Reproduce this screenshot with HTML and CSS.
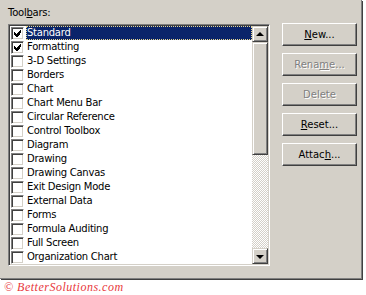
FILE: index.html
```html
<!DOCTYPE html>
<html>
<head>
    <title>Customize - Toolbars</title>
    <link rel="stylesheet" href="styles.css">
</head>
<body>
    <div class="dialog">
        <div class="left">
            <div class="label">Tool<u>b</u>ars:</div>
            <div class="listbox">
                <div class="items">
                    <div class="row selected"><span class="check on"><svg width="7" height="7" viewBox="0 0 7 7" shape-rendering="crispEdges"><path d="M6 0h1v3h-1zM5 1h1v4h-1zM4 2h1v4h-1zM3 3h1v4h-1zM2 4h1v3h-1zM1 3h1v3h-1zM0 2h1v3h-1z" fill="#000"/></svg></span><span class="text">Standard</span></div>
                    <div class="row"><span class="check on"><svg width="7" height="7" viewBox="0 0 7 7" shape-rendering="crispEdges"><path d="M6 0h1v3h-1zM5 1h1v4h-1zM4 2h1v4h-1zM3 3h1v4h-1zM2 4h1v3h-1zM1 3h1v3h-1zM0 2h1v3h-1z" fill="#000"/></svg></span><span class="text">Formatting</span></div>
                    <div class="row"><span class="check"></span><span class="text">3-D Settings</span></div>
                    <div class="row"><span class="check"></span><span class="text">Borders</span></div>
                    <div class="row"><span class="check"></span><span class="text">Chart</span></div>
                    <div class="row"><span class="check"></span><span class="text">Chart Menu Bar</span></div>
                    <div class="row"><span class="check"></span><span class="text">Circular Reference</span></div>
                    <div class="row"><span class="check"></span><span class="text">Control Toolbox</span></div>
                    <div class="row"><span class="check"></span><span class="text">Diagram</span></div>
                    <div class="row"><span class="check"></span><span class="text">Drawing</span></div>
                    <div class="row"><span class="check"></span><span class="text">Drawing Canvas</span></div>
                    <div class="row"><span class="check"></span><span class="text">Exit Design Mode</span></div>
                    <div class="row"><span class="check"></span><span class="text">External Data</span></div>
                    <div class="row"><span class="check"></span><span class="text">Forms</span></div>
                    <div class="row"><span class="check"></span><span class="text">Formula Auditing</span></div>
                    <div class="row"><span class="check"></span><span class="text">Full Screen</span></div>
                    <div class="row"><span class="check"></span><span class="text">Organization Chart</span></div>
                </div>
                <div class="scrollbar">
                    <div class="sbtn"><span class="arrow up"></span></div>
                    <div class="thumb"></div>
                    <div class="track"></div>
                    <div class="sbtn"><span class="arrow down"></span></div>
                </div>
            </div>
        </div>
        <div class="buttons">
            <button><u>N</u>ew...</button>
            <button disabled>Rena<u>m</u>e...</button>
            <button disabled>Delete</button>
            <button><u>R</u>eset...</button>
            <button>Attac<u>h</u>...</button>
        </div>
    </div>
    <div class="footer">&copy; BetterSolutions.com</div>
</body>
</html>
```

FILE: styles.css
```css
body {
    margin: 0;
    background: #fff;
    font-family: "DejaVu Sans", sans-serif;
    font-size: 10px;
    letter-spacing: -0.25px;
    color: #000;
}
.dialog {
    display: flex;
    width: 353px;
    height: 272px;
    padding: 6px 0 0 8px;
    background: #d4d0c8;
    border-right: 1px solid #808080;
    border-bottom: 1px solid #808080;
    box-shadow: 1px 1px 0 #404040;
}
.label {
    height: 18px;
    line-height: 14px;
}
.listbox {
    display: flex;
    width: 258px;
    height: 238px;
    border: 1px solid;
    border-color: #808080 #fff #fff #808080;
    box-shadow: inset 1px 1px #404040, inset -1px -1px #d4d0c8;
    padding: 1px;
    background: #fff;
}
.items {
    flex: 1;
    overflow: hidden;
}
.row {
    display: flex;
    align-items: center;
    height: 14px;
    padding-left: 1px;
}
.check {
    width: 11px;
    height: 11px;
    border: 1px solid;
    border-color: #808080 #fff #fff #808080;
    box-shadow: inset 1px 1px #404040, inset -1px -1px #d4d0c8;
    background: #fff;
    display: flex;
    align-items: center;
    justify-content: center;
    margin-right: 2px;
}
.check svg {
    display: block;
}
.text {
    flex: 1;
    height: 14px;
    line-height: 14px;
    padding-left: 1px;
    white-space: nowrap;
}
.selected .text {
    background: #0a246a;
    color: #fff;
    outline: 1px dotted #e8d890;
    outline-offset: -1px;
}
.scrollbar {
    width: 16px;
    display: flex;
    flex-direction: column;
}
.sbtn, .thumb {
    box-sizing: border-box;
    background: #d4d0c8;
    border: 1px solid;
    border-color: #d4d0c8 #404040 #404040 #d4d0c8;
    box-shadow: inset 1px 1px #fff, inset -1px -1px #808080;
}
.sbtn {
    height: 16px;
    display: flex;
    align-items: center;
    justify-content: center;
}
.thumb {
    height: 113px;
}
.track {
    flex: 1;
    background: repeating-conic-gradient(#fff 0 25%, #d4d0c8 0 50%) 0 0 / 2px 2px;
}
.arrow {
    width: 0;
    height: 0;
    border-left: 4px solid transparent;
    border-right: 4px solid transparent;
}
.arrow.up {
    border-bottom: 4px solid #000;
    margin-top: -1px;
}
.arrow.down {
    border-top: 4px solid #000;
    margin-top: 1px;
}
.buttons {
    display: flex;
    flex-direction: column;
    gap: 7px;
    margin-left: 12px;
    padding-top: 17px;
}
button {
    width: 75px;
    height: 23px;
    padding: 0;
    background: #d4d0c8;
    border: 1px solid;
    border-color: #fff #404040 #404040 #fff;
    box-shadow: inset -1px -1px #808080;
    font-family: "DejaVu Sans", sans-serif;
    font-size: 10px;
    letter-spacing: 0;
    color: #000;
}
button:disabled {
    color: #808080;
    text-shadow: 1px 1px #fff;
}
.footer {
    padding: 1px 0 0 4px;
    font-family: "Liberation Serif", serif;
    font-style: italic;
    font-size: 12px;
    letter-spacing: 0.5px;
    color: #e8373c;
}
```
